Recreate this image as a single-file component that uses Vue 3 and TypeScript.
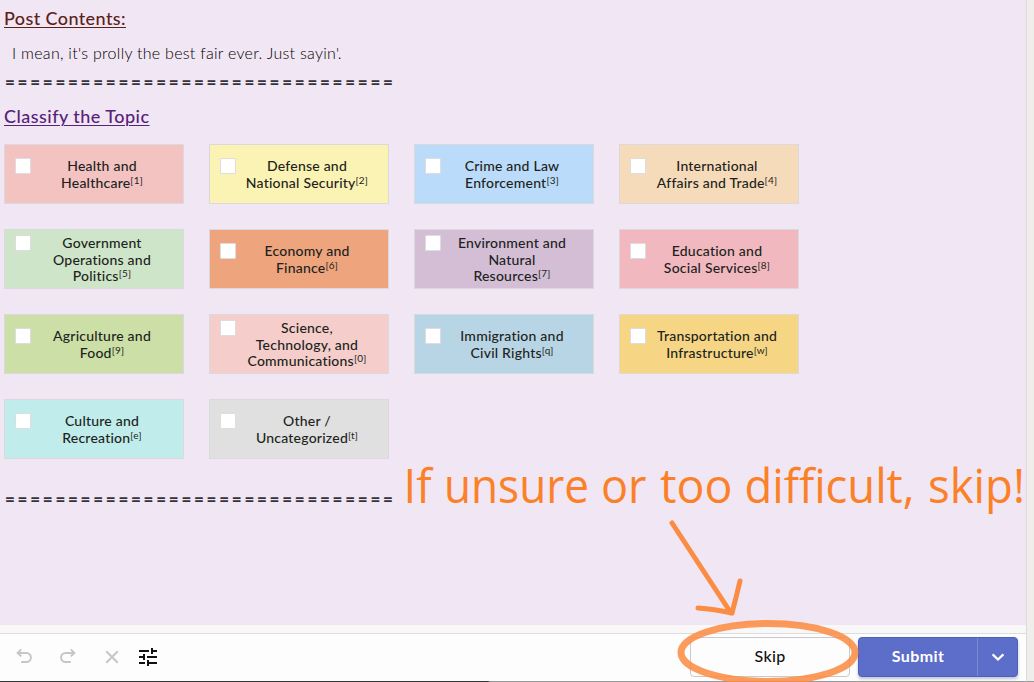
<script setup lang="ts">
interface Topic {
  lines: string[]
  hotkey: string
  tone: string
}

interface NoteWord {
  text: string
  x: number
  width: number
}

const topics: Topic[] = [
  { lines: ['Health and', 'Healthcare'], hotkey: '1', tone: 'rose' },
  { lines: ['Defense and', 'National Security'], hotkey: '2', tone: 'yellow' },
  { lines: ['Crime and Law', 'Enforcement'], hotkey: '3', tone: 'sky' },
  { lines: ['International', 'Affairs and Trade'], hotkey: '4', tone: 'peach' },
  { lines: ['Government', 'Operations and', 'Politics'], hotkey: '5', tone: 'mint' },
  { lines: ['Economy and', 'Finance'], hotkey: '6', tone: 'orange' },
  { lines: ['Environment and', 'Natural', 'Resources'], hotkey: '7', tone: 'mauve' },
  { lines: ['Education and', 'Social Services'], hotkey: '8', tone: 'pink' },
  { lines: ['Agriculture and', 'Food'], hotkey: '9', tone: 'green' },
  { lines: ['Science,', 'Technology, and', 'Communications'], hotkey: '0', tone: 'blush' },
  { lines: ['Immigration and', 'Civil Rights'], hotkey: 'q', tone: 'steel' },
  { lines: ['Transportation and', 'Infrastructure'], hotkey: 'w', tone: 'gold' },
  { lines: ['Culture and', 'Recreation'], hotkey: 'e', tone: 'aqua' },
  { lines: ['Other /', 'Uncategorized'], hotkey: 't', tone: 'gray' },
]
const noteWords: NoteWord[] = [
  { text: 'If', x: 403.5, width: 28 },
  { text: 'unsure', x: 444, width: 145 },
  { text: 'or', x: 601, width: 45.5 },
  { text: 'too', x: 660, width: 72.5 },
  { text: 'difficult,', x: 744.5, width: 170 },
  { text: 'skip!', x: 928, width: 97 },
]
const divider = '='.repeat(31)
</script>

<template>
  <div class="page">
    <div class="main">
      <main class="content">
        <h2 class="heading post">Post Contents:</h2>
        <p class="body">I mean, it's prolly the best fair ever. Just sayin'.</p>
        <div class="divider">{{ divider }}</div>
        <h2 class="heading classify">Classify the Topic</h2>
        <div class="grid">
          <label v-for="t in topics" :key="t.hotkey" class="card" :class="t.tone">
            <span class="box" :class="{ tall: t.lines.length === 3 }"></span>
            <span class="label" :class="{ tall: t.lines.length === 3 }">
              <span v-for="(line, i) in t.lines" :key="line" class="line">{{ line }}<sup v-if="i === t.lines.length - 1">[{{ t.hotkey }}]</sup></span>
            </span>
          </label>
        </div>
        <div class="divider second">{{ divider }}</div>
      </main>
      <footer class="bar">
        <div class="tools">
          <svg width="24" height="24" viewBox="0 0 24 24" class="muted"><path d="M9.2 4.4 5.7 7.9l3.5 3.5M6 7.9h8.3a4.6 4.6 0 0 1 0 9.2H9.2" /></svg>
          <svg width="24" height="24" viewBox="0 0 24 24" class="muted"><path d="m14.8 4.4 3.5 3.5-3.5 3.5M18 7.9H9.7a4.6 4.6 0 0 0 0 9.2h5.1" /></svg>
          <svg width="24" height="24" viewBox="0 0 24 24" class="muted"><path d="m6.3 6.3 11.4 11.4m0-11.4-11.4 11.4" /></svg>
          <svg width="24" height="24" viewBox="0 0 24 24" class="tune"><path d="M3 6h10M17 6h4M16 3v6M3 12h4M8 9v6M11 12h10M3 18h6M13 18h8M12 15v6" /></svg>
        </div>
        <div class="actions">
          <button class="skip">Skip</button>
          <div class="split">
            <button class="submit">Submit</button>
            <button class="more" aria-label="More">
              <svg width="16" height="16" viewBox="0 0 16 16"><path d="m2.6 5.3 5.4 5.2 5.4-5.2" /></svg>
            </button>
          </div>
        </div>
      </footer>
      <div class="edge"></div>
    </div>
    <div class="gutter"></div>
    <svg class="note" width="1034" height="682" viewBox="0 0 1034 682">
      <text v-for="w in noteWords" :key="w.text" :x="w.x" y="502.5" :textLength="w.width" lengthAdjust="spacingAndGlyphs">{{ w.text }}</text>
      <path class="arrow" d="M672 523 731 613M698 608 Q714 609 732 613Q736 598 740 581" />
      <ellipse cx="768" cy="652.5" rx="87" ry="29" />
    </svg>
  </div>
</template>

<style>
html, body { margin: 0; overflow: hidden; }
</style>

<style scoped>
.page {
  position: relative;
  display: flex;
  width: 1034px;
  height: 682px;
  font-family: Lato, "Liberation Sans", sans-serif;
  background: #f9f7f8;
}
.main { width: 1026px; display: flex; flex-direction: column; }
.gutter { flex: 1; border-left: 1px solid #dcdbd9; background: #efeeea; border-bottom: 1px solid #999; }
.content { height: 625px; box-sizing: border-box; padding: 6px 4px 0; background: #f1e6f3; }
.heading { margin: 0; font-size: 18px; line-height: 24px; font-weight: 500; text-decoration: underline; text-decoration-thickness: 1px; text-underline-offset: 2px; width: max-content; }
.post { color: #5c2118; letter-spacing: 0.4px; }
.classify { color: #56227a; margin-top: 11px; letter-spacing: 0.47px; }
.body { margin: 11px 0 0 8px; font-size: 16px; line-height: 24px; font-weight: 300; color: #000; letter-spacing: 0.28px; white-space: nowrap; }
.divider { margin-top: 6px; height: 22px; line-height: 22px; font-size: 17px; font-weight: 900; color: #35323a; letter-spacing: 2.74px; padding-left: 1px; white-space: nowrap; }
.grid { display: grid; grid-template-columns: repeat(4, 180px); grid-auto-rows: 60px; gap: 25px; margin-top: 16px; }
.card { box-sizing: border-box; border: 1px solid #dcd9dc; display: flex; align-items: center; padding-left: 10px; }
.box { box-sizing: border-box; width: 16px; height: 16px; flex: none; border: 1px solid #dedcdf; border-radius: 1px; background: #fff; position: relative; top: -8px; }
.box.tall { top: -16px; }
.label { margin-left: 3px; width: 136px; text-align: center; font-size: 14px; font-weight: 500; line-height: 16.7px; color: #211f20; letter-spacing: 0.22px; padding-top: 1px; }
.label.tall { padding-top: 2px; }
.line { display: block; white-space: nowrap; }
sup { font-size: 10px; font-weight: 400; line-height: 0; vertical-align: 4px; }
.rose { background: #f3c3c2; }
.yellow { background: #fbf3b4; }
.sky { background: #badcfa; }
.peach { background: #f6dbba; }
.mint { background: #cfe5ca; }
.orange { background: #eea57d; }
.mauve { background: #d3bed5; }
.pink { background: #f1b9bf; }
.green { background: #cbdfa6; }
.blush { background: #f5cecb; }
.steel { background: #b8d5e5; }
.gold { background: #f6d685; }
.aqua { background: #c0ecec; }
.gray { background: #e0e0e0; }
.second { margin-top: 29px; }
.bar { margin-top: 8px; height: 48px; box-sizing: border-box; border-top: 1px solid #dedddd; background: #fdfdfd; display: flex; justify-content: space-between; align-items: flex-start; padding: 3px 8px 0 0; }
.edge { height: 1px; background: linear-gradient(to right, #383634 0 488px, #999 490px); }
.tools { display: flex; padding: 8px 0 0 12px; gap: 20px; }
.tools svg { fill: none; stroke-width: 2; }
.tools .tune { margin-left: -8px; stroke: #111; }
.muted { stroke: #c7c5c5; }
button { margin: 0; padding: 0 0 3px; font: 500 16px Lato, sans-serif; box-sizing: border-box; }
.actions { display: flex; gap: 8px; }
.skip { width: 160px; height: 40px; border: 1px solid #cac8cc; border-radius: 4px; background: #fdfdfd; color: #111; letter-spacing: .3px; }
.split { display: flex; width: 160px; height: 40px; border: 1px solid #5060b5; border-radius: 4px; background: #5d6dca; box-sizing: border-box; box-shadow: 0 2px 3px #8d93be88; }
.submit { width: 119px; border: 0; border-right: 1px solid #7b88d5; background: transparent; color: #fff; font-weight: 700; letter-spacing: .4px; }
.more { flex: 1; border: 0; background: transparent; display: grid; place-items: center; padding: 0; }
.more svg { fill: none; stroke: #fff; stroke-width: 2.3; }
.note { position: absolute; inset: 0; pointer-events: none; fill: none; }
.note text { font: 47px "Open Sans", "Noto Sans", sans-serif; fill: #fb8129; }
.arrow { stroke: #fb8c44; stroke-width: 5; stroke-linecap: round; stroke-linejoin: round; }
.note ellipse { stroke: #fb893d; stroke-opacity: .84; stroke-width: 7; }
</style>
